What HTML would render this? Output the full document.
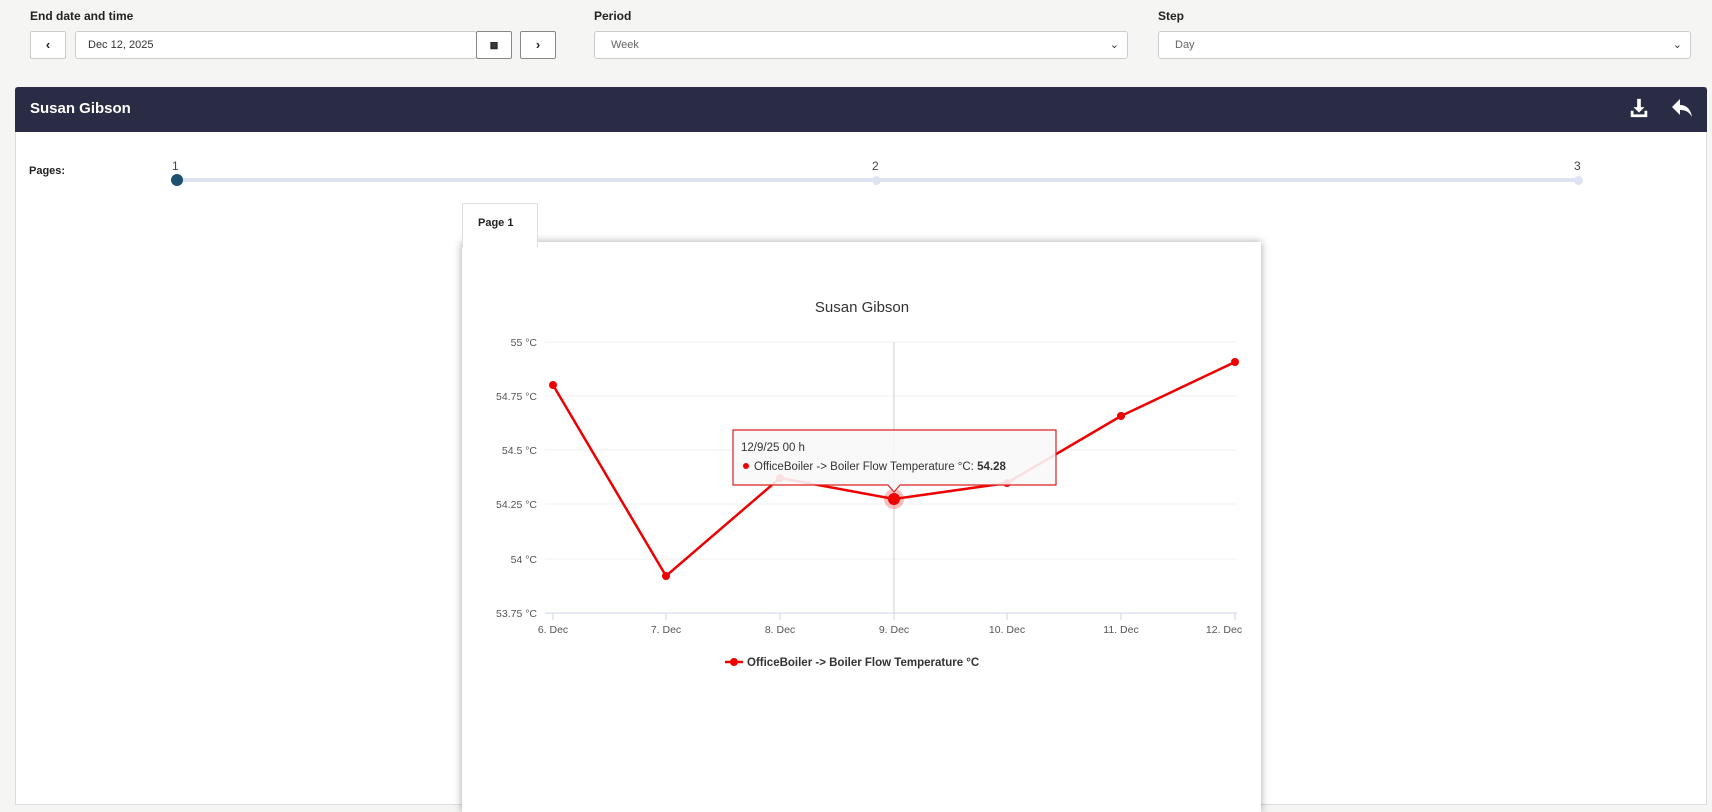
<!DOCTYPE html><html><head><meta charset="utf-8"><style>
body{margin:0;width:1712px;height:805px;background:#f5f5f4;font-family:"Liberation Sans",sans-serif;position:relative;overflow:hidden;color:#222}
.a{position:absolute}
.lbl{font-size:12px;font-weight:bold;top:9px}
.box{background:#fff;border:1px solid #ccc;border-radius:3px;height:28px;box-sizing:border-box;font-size:11px;line-height:26px;color:#333}
.btn{background:#fff;border:1px solid #888;border-radius:2px;height:28px;box-sizing:border-box;text-align:center;line-height:26px;font-size:13px;font-weight:bold}
</style></head><body>
<div class="a lbl" style="left:30px">End date and time</div>
<div class="a lbl" style="left:594px">Period</div>
<div class="a lbl" style="left:1158px">Step</div>
<div class="a btn" style="left:30px;top:31px;width:36px;border-color:#ccc">&#8249;</div>
<div class="a box" style="left:75px;top:31px;width:402px;padding-left:12px">Dec 12, 2025</div>
<div class="a btn" style="left:476px;top:31px;width:36px;font-size:9px">&#9641;</div>
<div class="a btn" style="left:520px;top:31px;width:36px">&#8250;</div>
<div class="a box" style="left:594px;top:31px;width:534px;padding-left:16px;color:#666">Week<span style="position:absolute;right:8px;color:#333">&#8964;</span></div>
<div class="a box" style="left:1158px;top:31px;width:533px;padding-left:16px;color:#666">Day<span style="position:absolute;right:8px;color:#333">&#8964;</span></div>
<div class="a" style="left:15px;top:87px;width:1692px;height:718px;background:#fff;border:1px solid #ddd;box-sizing:border-box"></div>
<div class="a" style="left:15px;top:87px;width:1692px;height:45px;background:#2a2b45;border-radius:3px 3px 0 0"></div>
<div class="a" style="left:30px;top:100px;color:#fff;font-weight:bold;font-size:15px">Susan Gibson</div>
<svg class="a" style="left:1628px;top:97px" width="22" height="22" viewBox="0 0 24 24" fill="#fff"><path d="M10 2h4v9h4l-6 6-6-6h4z"/><path d="M3 15h3v4h12v-4h3v7H3z"/></svg>
<svg class="a" style="left:1670px;top:97px" width="24" height="22" viewBox="0 0 24 22" fill="#fff"><path d="M10 2 2 10l8 8v-5c6 0 9 2 12 7-1-7-5-12-12-12z"/></svg>
<div class="a" style="left:29px;top:165px;font-size:11px;font-weight:bold">Pages:</div>
<div class="a" style="left:177px;top:178px;width:1402px;height:4px;background:#dde3f0"></div>
<div class="a" style="left:171px;top:174px;width:12px;height:12px;border-radius:50%;background:#1e5070"></div>
<div class="a" style="left:872px;top:176px;width:9px;height:9px;border-radius:50%;background:#dde3f0"></div>
<div class="a" style="left:1574px;top:176px;width:9px;height:9px;border-radius:50%;background:#dde3f0"></div>
<div class="a" style="left:172px;top:159px;font-size:12px;color:#444">1</div>
<div class="a" style="left:872px;top:159px;font-size:12px;color:#444">2</div>
<div class="a" style="left:1574px;top:159px;font-size:12px;color:#444">3</div>
<div class="a" style="left:462px;top:242px;width:799px;height:570px;background:#fff;box-shadow:0 0 8px rgba(0,0,0,.35)"></div>
<div class="a" style="left:462px;top:203px;width:76px;height:44px;background:#fff;border:1px solid #ddd;border-bottom:none;box-sizing:border-box;font-size:11px;font-weight:bold;padding:13px 0 0 15px">Page 1</div>
<svg class="a" style="left:0;top:0" width="1712" height="805" font-family="Liberation Sans,sans-serif">
<text x="862" y="312" text-anchor="middle" font-size="15" fill="#333">Susan Gibson</text>
<g stroke="#f0f0f0"><line x1="545" x2="1237" y1="342" y2="342"/><line x1="545" x2="1237" y1="396" y2="396"/><line x1="545" x2="1237" y1="450" y2="450"/><line x1="545" x2="1237" y1="504" y2="504"/><line x1="545" x2="1237" y1="559" y2="559"/></g>
<line x1="545" x2="1237" y1="613" y2="613" stroke="#ccd6eb"/>
<g stroke="#ccd6eb"><line x1="553" x2="553" y1="613" y2="620"/><line x1="666" x2="666" y1="613" y2="620"/><line x1="780" x2="780" y1="613" y2="620"/><line x1="894" x2="894" y1="613" y2="620"/><line x1="1007" x2="1007" y1="613" y2="620"/><line x1="1121" x2="1121" y1="613" y2="620"/><line x1="1235" x2="1235" y1="613" y2="620"/></g>
<line x1="894" x2="894" y1="342" y2="613" stroke="#ccc"/>
<g font-size="10.5" fill="#555" text-anchor="end"><text x="537" y="346">55 °C</text><text x="537" y="400">54.75 °C</text><text x="537" y="454">54.5 °C</text><text x="537" y="508">54.25 °C</text><text x="537" y="563">54 °C</text><text x="537" y="617">53.75 °C</text></g>
<g font-size="10.5" fill="#555" text-anchor="middle"><text x="553" y="633">6. Dec</text><text x="666" y="633">7. Dec</text><text x="780" y="633">8. Dec</text><text x="894" y="633">9. Dec</text><text x="1007" y="633">10. Dec</text><text x="1121" y="633">11. Dec</text><text x="1224" y="633">12. Dec</text></g>
<polyline fill="none" stroke="#e00" stroke-width="2.5" points="553,385 666,576 780,478 894,499 1007,483 1121,416 1235,362"/>
<g fill="#e00"><circle cx="553" cy="385" r="4"/><circle cx="666" cy="576" r="4"/><circle cx="780" cy="478" r="4"/><circle cx="1007" cy="483" r="4"/><circle cx="1121" cy="416" r="4"/><circle cx="1235" cy="362" r="4"/><circle cx="894" cy="499" r="10" opacity=".25"/><circle cx="894" cy="499" r="6"/></g>
<path d="M733 430h323v55H900l-6 7-6-7H733z" fill="rgba(248,248,248,.9)" stroke="#d22" stroke-width="1.2"/>
<text x="741" y="451" font-size="11.5" fill="#333">12/9/25 00 h</text>
<circle cx="746" cy="466" r="3" fill="#e00"/>
<text x="754" y="470" font-size="11.5" fill="#333">OfficeBoiler -&gt; Boiler Flow Temperature °C: <tspan font-weight="bold">54.28</tspan></text>
<line x1="725" x2="743" y1="662" y2="662" stroke="#e00" stroke-width="2.5"/><circle cx="734" cy="662" r="4" fill="#e00"/>
<text x="747" y="666" font-size="11.5" font-weight="bold" fill="#333">OfficeBoiler -&gt; Boiler Flow Temperature °C</text>
</svg>
</body></html>
